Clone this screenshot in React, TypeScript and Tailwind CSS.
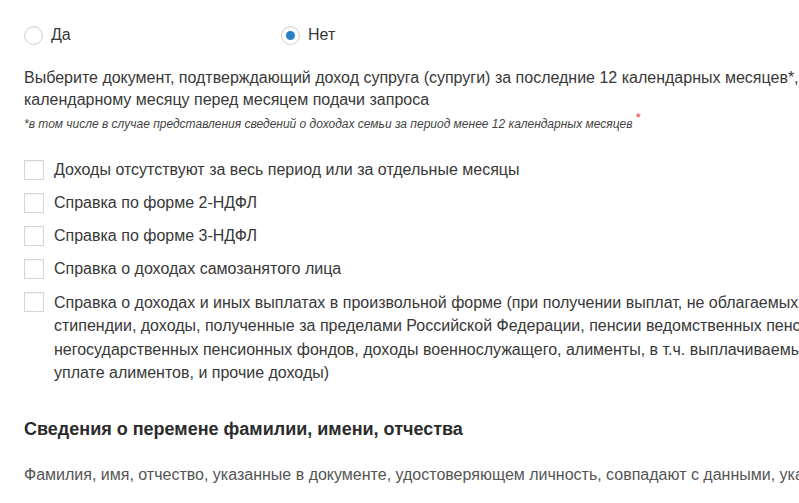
import React from 'react';

const docs = [
  'Доходы отсутствуют за весь период или за отдельные месяцы',
  'Справка по форме 2-НДФЛ',
  'Справка по форме 3-НДФЛ',
  'Справка о доходах самозанятого лица',
];

// the form is wider than the window, lines break as in the original
const longDoc = [
  'Справка о доходах и иных выплатах в произвольной форме (при получении выплат, не облагаемых НДФЛ:',
  'стипендии, доходы, полученные за пределами Российской Федерации, пенсии ведомственных пенсионных фондов,',
  'негосударственных пенсионных фондов, доходы военнослужащего, алименты, в т.ч. выплачиваемые по соглашению об',
  'уплате алиментов, и прочие доходы)',
];

function Radio({ label, checked }: { label: string; checked?: boolean }) {
  return (
    <label className="flex items-center gap-[8px]">
      <span className="flex h-[19px] w-[19px] items-center justify-center rounded-full border border-[#d4d4d4] bg-white shadow-[inset_0_1px_2px_rgba(0,0,0,0.08)]">
        {checked && <span className="h-[9px] w-[9px] rounded-full bg-[#2d7fc3]" />}
      </span>
      <span>{label}</span>
    </label>
  );
}

function Box() {
  return (
    <span className="h-[20px] w-[20px] shrink-0 border border-[#d6d6d6] bg-white shadow-[inset_0_1px_2px_rgba(0,0,0,0.06)]" />
  );
}

export default function App() {
  return (
    <div className="h-[503px] w-[799px] overflow-hidden bg-white font-['Liberation_Sans',Arial,sans-serif] text-[16px] text-[#383838]">
      <div className="w-[900px] pl-[24px] pt-[25px]">
        {/* Marital answer */}
        <div className="flex h-[20px] items-center">
          <div className="w-[257px]">
            <Radio label="Да" />
          </div>
          <Radio label="Нет" checked />
        </div>

        {/* Income documents */}
        <p className="mt-[22px] whitespace-nowrap leading-[22px]">
          Выберите документ, подтверждающий доход супруга (супруги) за последние 12 календарных месяцев*, предшествующих
          <br />
          календарному месяцу перед месяцем подачи запроса
        </p>
        <p className="mt-[5px] whitespace-nowrap text-[12px] italic leading-[16px] text-[#444]">
          *в том числе в случае представления сведений о доходах семьи за период менее 12 календарных месяцев{' '}
          <sup className="text-[13px] not-italic text-[#e0413a]">*</sup>
        </p>

        <div className="mt-[28px] flex flex-col gap-[13px] leading-[20px]">
          {docs.map((d) => (
            <label key={d} className="flex items-start gap-[10px]">
              <Box />
              <span>{d}</span>
            </label>
          ))}
          <label className="flex items-start gap-[10px]">
            <Box />
            <span className="-mt-[1px] whitespace-nowrap leading-[23.3px]">
              {longDoc.map((line) => (
                <span key={line} className="block">
                  {line}
                </span>
              ))}
            </span>
          </label>
        </div>

        {/* Name change */}
        <h2 className="mt-[34px] text-[18px] font-bold leading-[22px] text-[#2b2b2b]">
          Сведения о перемене фамилии, имени, отчества
        </h2>
        <p className="mt-[25px] whitespace-nowrap text-[16px] leading-[20px] text-[#555]">
          Фамилия, имя, отчество, указанные в документе, удостоверяющем личность, совпадают с данными, указанными в заявлении
        </p>
      </div>
    </div>
  );
}
